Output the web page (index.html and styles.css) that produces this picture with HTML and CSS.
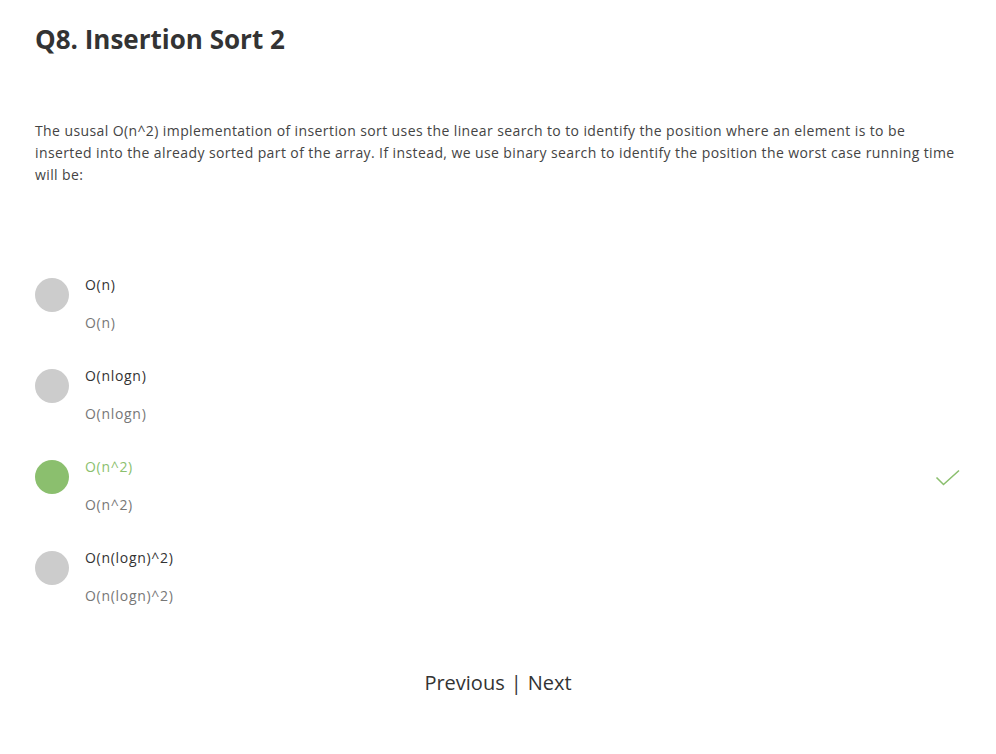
FILE: index.html
```
<!DOCTYPE html>
<html lang="en">
<head>
<meta charset="utf-8">
<title>Q8. Insertion Sort 2</title>
<link rel="stylesheet" href="styles.css">
</head>
<body>
<main class="page">
  <h1 class="title">Q8. Insertion Sort 2</h1>
  <p class="question">The ususal O(n^2) implementation of insertion sort uses the linear search to to identify the position where an element is to be inserted into the already sorted part of the array. If instead, we use binary search to identify the position the worst case running time will be:</p>
  <ul class="options">
    <li class="option">
      <span class="dot"></span>
      <div class="texts">
        <div class="label">O(n)</div>
        <div class="sub">O(n)</div>
      </div>
    </li>
    <li class="option">
      <span class="dot"></span>
      <div class="texts">
        <div class="label">O(nlogn)</div>
        <div class="sub">O(nlogn)</div>
      </div>
    </li>
    <li class="option correct">
      <span class="dot"></span>
      <div class="texts">
        <div class="label">O(n^2)</div>
        <div class="sub">O(n^2)</div>
      </div>
      <svg class="check" width="26" height="18" viewBox="0 0 26 18"><path d="M1.5 8.5 L8.5 15.5 L24 1.5" fill="none" stroke="#8bbf6e" stroke-width="1.6"/></svg>
    </li>
    <li class="option">
      <span class="dot"></span>
      <div class="texts">
        <div class="label">O(n(logn)^2)</div>
        <div class="sub">O(n(logn)^2)</div>
      </div>
    </li>
  </ul>
  <nav class="pager"><a class="link">Previous</a><span class="sep">|</span><a class="link">Next</a></nav>
</main>
</body>
</html>
```
FILE: styles.css
```
html, body { margin: 0; padding: 0; background: #fff; }
body { font-family: "Open Sans", "Lato", sans-serif; color: #333; }
.page { padding: 22px 35px 0 35px; }
.title { margin: 0; font-size: 26px; font-weight: 700; line-height: 34px; color: #333; }
.question { margin: 64px 0 0 0; font-size: 14px; line-height: 22px; color: #444; letter-spacing: 0.4px; }
.options { list-style: none; margin: 89px 0 0 0; padding: 0; }
.option { display: flex; align-items: flex-start; height: 91px; }
.dot { width: 34px; height: 34px; border-radius: 50%; background: #cccccc; margin-top: 3px; flex: none; }
.texts { margin-left: 16px; flex: 1; }
.label { font-size: 14px; line-height: 20px; color: #333; letter-spacing: 0.7px; }
.sub { font-size: 14px; line-height: 20px; color: #777; margin-top: 18px; letter-spacing: 0.7px; }
.correct .dot { background: #8bbf6e; }
.correct .label { color: #8bbf6e; }
.check { margin-top: 12px; margin-right: 0; flex: none; }
.pager { display: flex; justify-content: center; align-items: center; gap: 6px; margin-top: 30px; font-size: 20px; color: #333; }
.link { cursor: pointer; }
.sep { font-size: 20px; }
```
